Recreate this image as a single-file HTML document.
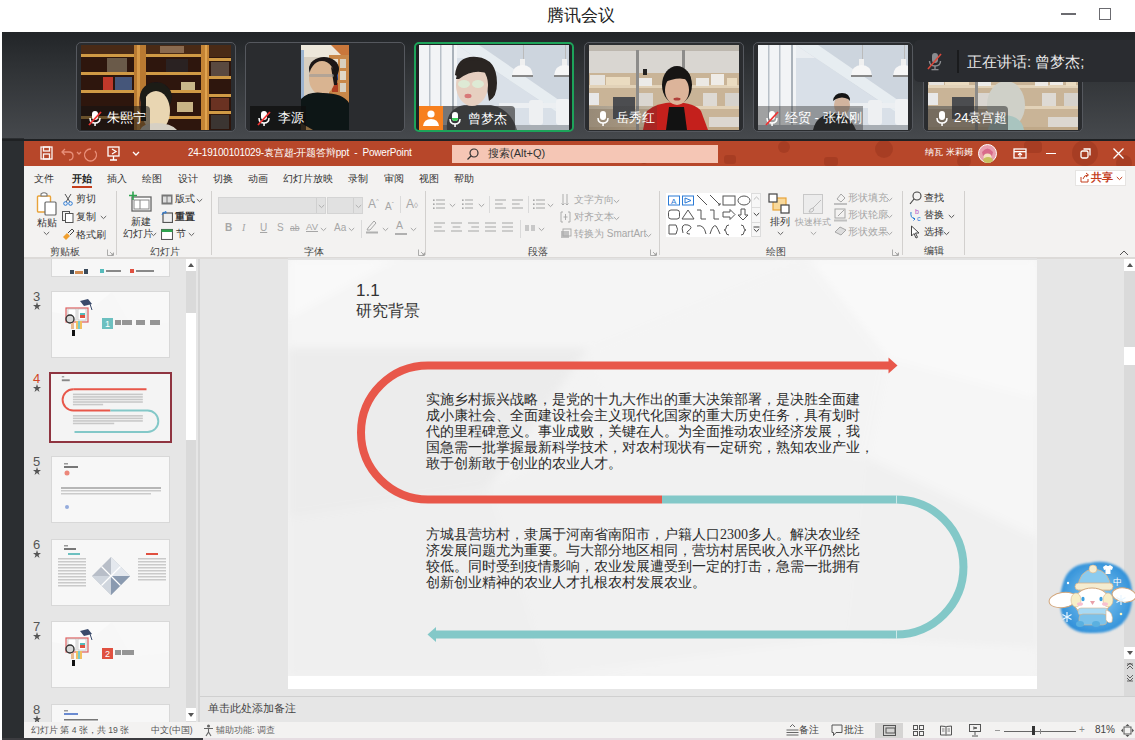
<!DOCTYPE html>
<html><head><meta charset="utf-8">
<style>
*{margin:0;padding:0;box-sizing:border-box}
html,body{width:1135px;height:740px;overflow:hidden;background:#fff;font-family:"Liberation Sans",sans-serif;position:relative}
.a{position:absolute}
.t{position:absolute;white-space:nowrap;line-height:1}
</style></head><body>

<!-- Tencent meeting title bar -->
<div class="a" style="left:0;top:0;width:1135px;height:32px;background:#fff"></div>
<div class="t" style="left:547px;top:6.5px;font-size:16.5px;color:#222">腾讯会议</div>
<div class="a" style="left:1061px;top:13px;width:15px;height:2px;background:#6b6b70"></div>
<div class="a" style="left:1099px;top:8px;width:12px;height:12px;border:1.6px solid #6b6b70"></div>

<!-- video strip -->
<div class="a" id="vstrip" style="left:2px;top:32px;width:1133px;height:107px;background:linear-gradient(#222528,#2e3134 30%,#46494d)"></div>


<!-- TILES -->
<style>
.tile{position:absolute;top:42px;width:160px;height:90px;border:1.5px solid #55585e;border-radius:5px;background:#2a2c2f;overflow:hidden}
.vid{position:absolute;left:4px;top:2px;width:150px;height:85px}
.nm{position:absolute;color:#fff;font-size:13px;line-height:1;white-space:nowrap}
</style>
<div class="tile" style="left:76px">
 <svg class="vid" viewBox="0 0 150 85" width="150" height="85">
  <defs><filter id="bl1"><feGaussianBlur stdDeviation="0.6"/></filter></defs>
  <g filter="url(#bl1)">
  <rect width="150" height="85" fill="#2e160b"/>
  <rect x="0" y="0" width="150" height="12" fill="#4a2a14"/>
  <rect x="0" y="9" width="53" height="3" fill="#d09a45"/>
  <rect x="65" y="9" width="56" height="3" fill="#d09a45"/>
  <rect x="127" y="13" width="23" height="3" fill="#d09a45"/>
  <rect x="0" y="27" width="53" height="3" fill="#d09a45"/>
  <rect x="65" y="27" width="56" height="3" fill="#d09a45"/>
  <rect x="127" y="31" width="23" height="3" fill="#d09a45"/>
  <rect x="0" y="45" width="53" height="3" fill="#d09a45"/>
  <rect x="65" y="45" width="56" height="3" fill="#d09a45"/>
  <rect x="127" y="49" width="23" height="3" fill="#d09a45"/>
  <rect x="0" y="71" width="53" height="3" fill="#d09a45"/>
  <rect x="82" y="71" width="40" height="3" fill="#d09a45"/>
  <rect x="127" y="66" width="23" height="3" fill="#d09a45"/>
  <rect x="53" y="0" width="12" height="85" fill="#b97a32"/>
  <rect x="56" y="0" width="3" height="85" fill="#d89a48"/>
  <rect x="120" y="0" width="8" height="85" fill="#c48434"/>
  <rect x="124" y="0" width="2" height="85" fill="#e0a450"/>
  <rect x="22" y="32" width="10" height="13" fill="#c0392b"/>
  <rect x="34" y="32" width="17" height="13" fill="#45577a"/>
  <rect x="26" y="13" width="20" height="14" fill="#6a5a48"/>
  <rect x="85" y="14" width="22" height="13" fill="#2a2420"/>
  <rect x="100" y="37" width="14" height="8" fill="#c9b88a"/>
  <rect x="130" y="17" width="18" height="14" fill="#5a4a40"/>
  <rect x="130" y="53" width="18" height="12" fill="#6a3020"/>
  <rect x="96" y="57" width="16" height="10" fill="#c8b486"/>
  <rect x="130" y="70" width="18" height="14" fill="#3a3430"/>
  <rect x="79" y="1" width="24" height="7" fill="#8a6a50"/>
  <ellipse cx="64" cy="58" rx="6" ry="14" fill="#6a3a24"/>
  <ellipse cx="75" cy="52" rx="16" ry="15" fill="#1e1a17"/>
  <ellipse cx="75" cy="66" rx="14" ry="20" fill="#e9d6b2"/>
  <rect x="60" y="50" width="5" height="26" fill="#1e1a17"/>
  <path d="M59 85 Q62 78 75 78 Q90 78 96 85 Z" fill="#d6d0c4"/>
  </g>
 </svg>
 <div class="a" style="left:4px;top:63px;width:69px;height:24px;background:rgba(20,20,20,.55);border-radius:0 4px 0 0"></div>
 <svg class="a" style="left:10px;top:67px" width="16" height="17" viewBox="0 0 16 17"><rect x="5" y="1" width="6" height="9" rx="3" fill="#fff"/><path d="M3 8 Q3 13 8 13 Q13 13 13 8" stroke="#fff" stroke-width="1.5" fill="none"/><rect x="7.3" y="13" width="1.5" height="3" fill="#fff"/><line x1="2" y1="15" x2="14" y2="2" stroke="#e33" stroke-width="1.8"/></svg>
 <div class="nm" style="left:30px;top:68px">朱熙宁</div>
</div>

<div class="tile" style="left:245px">
 <svg class="a" style="left:55px;top:2px" width="48" height="85" viewBox="0 0 48 85">
  <defs><filter id="bl2"><feGaussianBlur stdDeviation="0.7"/></filter></defs>
  <g filter="url(#bl2)">
  <rect width="48" height="85" fill="#d8cfc0"/>
  <rect x="0" y="0" width="48" height="12" fill="#ede7da"/>
  <path d="M30 0 L48 0 L48 18 Z" fill="#c9773a"/>
  <rect x="0" y="5" width="3" height="50" fill="#9ab3d0"/>
  <rect x="28" y="10" width="20" height="50" fill="#c8884a"/>
  <rect x="31" y="14" width="6" height="9" fill="#e8e0d0"/><rect x="39" y="14" width="6" height="9" fill="#d8d0c0"/>
  <rect x="31" y="26" width="6" height="9" fill="#3050a0"/><rect x="39" y="26" width="6" height="9" fill="#e0d8c8"/>
  <rect x="31" y="38" width="6" height="9" fill="#b04020"/><rect x="39" y="38" width="6" height="9" fill="#d8d0c0"/>
  <ellipse cx="23" cy="24" rx="15" ry="12" fill="#1a1816"/>
  <ellipse cx="21" cy="33" rx="13" ry="17" fill="#d9b491"/>
  <path d="M30 22 Q38 26 36 40 L33 40 Z" fill="#1a1816"/>
  <rect x="8" y="29" width="25" height="3" rx="1.5" fill="#999" opacity=".6"/>
  <path d="M0 54 Q8 46 22 48 Q42 48 48 58 L48 85 L0 85 Z" fill="#111214"/>
  <path d="M0 78 L12 85 L0 85 Z" fill="#8a6a40"/>
  </g>
 </svg>
 <div class="a" style="left:4px;top:63px;width:56px;height:24px;background:rgba(15,15,15,.75)"></div>
 <svg class="a" style="left:10px;top:67px" width="16" height="17" viewBox="0 0 16 17"><rect x="5" y="1" width="6" height="9" rx="3" fill="#fff"/><path d="M3 8 Q3 13 8 13 Q13 13 13 8" stroke="#fff" stroke-width="1.5" fill="none"/><rect x="7.3" y="13" width="1.5" height="3" fill="#fff"/><line x1="2" y1="15" x2="14" y2="2" stroke="#e33" stroke-width="1.8"/></svg>
 <div class="nm" style="left:32px;top:68px">李源</div>
</div>


<div class="tile" style="left:414px;border:2px solid #1da35a;background:#1f2124">
 <svg class="vid" style="left:3px;top:1px" viewBox="0 0 150 85" width="150" height="85">
  
  <rect width="150" height="85" fill="#d9e0e8"/>
  <rect x="0" y="0" width="150" height="13" fill="#e9edf1"/>
  <path d="M38 0 L150 0 L150 70 L130 62 Z" fill="#cdd5de"/>
  <path d="M38 0 L60 0 L150 62 L150 75 Z" fill="#eef2f5" opacity=".8"/>
  <rect x="0" y="0" width="38" height="85" fill="#f2f4f6"/>
  <rect x="10" y="0" width="1.5" height="85" fill="#b8c0c8"/>
  <rect x="21" y="0" width="1.5" height="85" fill="#b8c0c8"/>
  <rect x="33" y="0" width="2" height="85" fill="#aab2ba"/>
  <rect x="104" y="0" width="1" height="16" fill="#bbb"/>
  <rect x="101" y="14" width="5" height="8" fill="#f0f0f0"/><path d="M93 31 Q94 20 103.5 20 Q113 20 114 31 Z" fill="#f6f6f6"/><rect x="93" y="30" width="21" height="2" fill="#888"/>
  <rect x="146" y="0" width="1" height="16" fill="#bbb"/>
  <rect x="143" y="14" width="5" height="8" fill="#f0f0f0"/><path d="M135 31 Q136 20 145.5 20 Q155 20 156 31 Z" fill="#f6f6f6"/><rect x="135" y="30" width="21" height="2" fill="#888"/>
  <rect x="80" y="58" width="70" height="5" fill="#eceff2"/>
  <rect x="110" y="55" width="14" height="25" rx="3" fill="#eef0f2"/>
  <rect x="137" y="54" width="14" height="26" rx="3" fill="#f0f2f4"/>
  <rect x="0" y="80" width="150" height="5" fill="#a8aeb4"/>

  <path d="M28 85 Q26 64 45 60 L72 60 Q92 64 98 85 Z" fill="#55575a"/>
  <path d="M36 30 Q38 10 58 12 Q78 14 78 38 Q78 52 70 56 L66 30 Q52 24 40 32 Z" fill="#2a2522"/>
  <ellipse cx="53" cy="40" rx="16" ry="21" fill="#e6cfc0"/>
  <path d="M37 34 Q40 14 58 15 Q74 17 72 30 Q56 22 40 34 Z" fill="#2a2522"/>
  <ellipse cx="45" cy="39" rx="6" ry="4" fill="#dcefd8" opacity=".85"/>
  <ellipse cx="59" cy="39" rx="6" ry="4" fill="#dcefd8" opacity=".85"/>
  <ellipse cx="49" cy="51" rx="3.5" ry="2.2" fill="#d87878"/>
 </svg>
 <div class="a" style="left:3px;top:62px;width:24px;height:24px;background:#f7801e"></div>
 <svg class="a" style="left:3px;top:62px" width="24" height="24" viewBox="0 0 24 24"><circle cx="12" cy="8" r="3.6" fill="#fff"/><path d="M4 20 Q5 13 12 13 Q19 13 20 20 Z" fill="#fff"/></svg>
 <div class="a" style="left:27px;top:62px;width:72px;height:24px;background:rgba(40,40,40,.62);border-radius:0 4px 0 0"></div>
 <svg class="a" style="left:31px;top:67px" width="16" height="17" viewBox="0 0 16 17"><rect x="5" y="1" width="6" height="9" rx="3" fill="#fff"/><path d="M5 7 L11 7 L11 7.5 Q11 10 8 10 Q5 10 5 7.5Z" fill="#3ccf5a"/><path d="M3 8 Q3 13 8 13 Q13 13 13 8" stroke="#fff" stroke-width="1.5" fill="none"/><rect x="7.3" y="13" width="1.5" height="3" fill="#fff"/></svg>
 <div class="nm" style="left:52px;top:68px">曾梦杰</div>
</div>

<div class="tile" style="left:584px">
 <svg class="vid" viewBox="0 0 150 85" width="150" height="85">
  
  <rect width="150" height="85" fill="#d4cfc7"/>
  <rect x="0" y="0" width="150" height="6" fill="#bdb7ae"/>
  <rect x="0" y="6" width="150" height="22" fill="#d9d6d1"/>
  <rect x="0" y="28" width="150" height="55" fill="#c9b497"/>
  <rect x="0" y="40" width="150" height="3" fill="#e2d2b8"/>
  <rect x="0" y="61" width="150" height="3" fill="#e2d2b8"/>
  <rect x="0" y="82" width="150" height="3" fill="#bfa888"/>
  <rect x="47" y="5" width="3" height="80" fill="#8d8c8a"/>
  <rect x="93" y="5" width="3" height="20" fill="#8d8c8a"/>
  <rect x="1" y="30" width="15" height="10" fill="#e6e3de"/>
  <rect x="17" y="32" width="24" height="8" fill="#eadbc0"/>
  <rect x="50" y="33" width="13" height="8" fill="#ecebe8"/>
  <rect x="54" y="24" width="4" height="6" fill="#222"/>
  <rect x="107" y="33" width="13" height="8" fill="#ece9e4"/>
  <rect x="122" y="29" width="13" height="11" fill="#efece7"/>
  <rect x="138" y="33" width="10" height="8" fill="#eadbc0"/>
  <rect x="0" y="48" width="10" height="12" fill="#e8e8e8"/>
  <rect x="24" y="52" width="22" height="22" fill="#4c4d50"/>
  <rect x="50" y="48" width="14" height="13" fill="#dad6d0"/>
  <rect x="114" y="48" width="14" height="13" fill="#dedad4"/>
  <rect x="136" y="48" width="14" height="13" fill="#d6d2cc"/>
  <rect x="120" y="72" width="30" height="10" fill="#dcd7d0"/>

  <path d="M54 85 L58 66 Q66 58 86 57 Q106 58 112 66 L119 85 Z" fill="#c4201c"/>
  <path d="M80 62 L95 62 L98 85 L77 85 Z" fill="#121212"/>
  <ellipse cx="88" cy="40" rx="15" ry="19" fill="#171514"/>
  <ellipse cx="88" cy="45" rx="12" ry="15" fill="#dcb49a"/>
  <path d="M74 38 Q76 24 88 23 Q102 24 102 36 Q90 30 74 38 Z" fill="#171514"/>
  <ellipse cx="88" cy="54" rx="3.5" ry="1.5" fill="#b0403a"/>
 </svg>
 <div class="a" style="left:4px;top:63px;width:68px;height:24px;background:linear-gradient(90deg,rgba(60,60,60,.35),rgba(60,60,60,.2))"></div>
 <svg class="a" style="left:10px;top:67px" width="16" height="17" viewBox="0 0 16 17"><rect x="5" y="1" width="6" height="9" rx="3" fill="#fff"/><path d="M3 8 Q3 13 8 13 Q13 13 13 8" stroke="#fff" stroke-width="1.5" fill="none"/><rect x="7.3" y="13" width="1.5" height="3" fill="#fff"/></svg>
 <div class="nm" style="left:31px;top:68px">岳秀红</div>
</div>

<div class="tile" style="left:753px">
 <svg class="vid" viewBox="0 0 150 85" width="150" height="85">
  
  <rect width="150" height="85" fill="#d9e0e8"/>
  <rect x="0" y="0" width="150" height="13" fill="#e9edf1"/>
  <path d="M38 0 L150 0 L150 70 L130 62 Z" fill="#cdd5de"/>
  <path d="M38 0 L60 0 L150 62 L150 75 Z" fill="#eef2f5" opacity=".8"/>
  <rect x="0" y="0" width="38" height="85" fill="#f2f4f6"/>
  <rect x="10" y="0" width="1.5" height="85" fill="#b8c0c8"/>
  <rect x="21" y="0" width="1.5" height="85" fill="#b8c0c8"/>
  <rect x="33" y="0" width="2" height="85" fill="#aab2ba"/>
  <rect x="104" y="0" width="1" height="16" fill="#bbb"/>
  <rect x="101" y="14" width="5" height="8" fill="#f0f0f0"/><path d="M93 31 Q94 20 103.5 20 Q113 20 114 31 Z" fill="#f6f6f6"/><rect x="93" y="30" width="21" height="2" fill="#888"/>
  <rect x="146" y="0" width="1" height="16" fill="#bbb"/>
  <rect x="143" y="14" width="5" height="8" fill="#f0f0f0"/><path d="M135 31 Q136 20 145.5 20 Q155 20 156 31 Z" fill="#f6f6f6"/><rect x="135" y="30" width="21" height="2" fill="#888"/>
  <rect x="80" y="58" width="70" height="5" fill="#eceff2"/>
  <rect x="110" y="55" width="14" height="25" rx="3" fill="#eef0f2"/>
  <rect x="137" y="54" width="14" height="26" rx="3" fill="#f0f2f4"/>
  <rect x="0" y="80" width="150" height="5" fill="#a8aeb4"/>

  <path d="M55 85 Q58 70 76 68 Q92 70 98 85 Z" fill="#151618"/>
  <ellipse cx="84" cy="60" rx="8" ry="10" fill="#d2b49e"/>
  <path d="M75 56 Q76 48 84 48 Q92 48 92 56 L90 54 Q84 51 78 54 Z" fill="#151515"/>
 </svg>
 <div class="a" style="left:4px;top:63px;width:105px;height:24px;background:rgba(60,60,60,.45)"></div>
 <svg class="a" style="left:10px;top:67px" width="16" height="17" viewBox="0 0 16 17"><rect x="5" y="1" width="6" height="9" rx="3" fill="#fff"/><path d="M3 8 Q3 13 8 13 Q13 13 13 8" stroke="#fff" stroke-width="1.5" fill="none"/><rect x="7.3" y="13" width="1.5" height="3" fill="#fff"/><line x1="2" y1="15" x2="14" y2="2" stroke="#e33" stroke-width="1.8"/></svg>
 <div class="nm" style="left:31px;top:68px">经贸 - 张松刚</div>
</div>

<div class="tile" style="left:923px">
 <svg class="vid" viewBox="0 0 150 85" width="150" height="85">
  
  <rect width="150" height="85" fill="#d4cfc7"/>
  <rect x="0" y="0" width="150" height="6" fill="#bdb7ae"/>
  <rect x="0" y="6" width="150" height="22" fill="#d9d6d1"/>
  <rect x="0" y="28" width="150" height="55" fill="#c9b497"/>
  <rect x="0" y="40" width="150" height="3" fill="#e2d2b8"/>
  <rect x="0" y="61" width="150" height="3" fill="#e2d2b8"/>
  <rect x="0" y="82" width="150" height="3" fill="#bfa888"/>
  <rect x="47" y="5" width="3" height="80" fill="#8d8c8a"/>
  <rect x="93" y="5" width="3" height="20" fill="#8d8c8a"/>
  <rect x="1" y="30" width="15" height="10" fill="#e6e3de"/>
  <rect x="17" y="32" width="24" height="8" fill="#eadbc0"/>
  <rect x="50" y="33" width="13" height="8" fill="#ecebe8"/>
  <rect x="54" y="24" width="4" height="6" fill="#222"/>
  <rect x="107" y="33" width="13" height="8" fill="#ece9e4"/>
  <rect x="122" y="29" width="13" height="11" fill="#efece7"/>
  <rect x="138" y="33" width="10" height="8" fill="#eadbc0"/>
  <rect x="0" y="48" width="10" height="12" fill="#e8e8e8"/>
  <rect x="24" y="52" width="22" height="22" fill="#4c4d50"/>
  <rect x="50" y="48" width="14" height="13" fill="#dad6d0"/>
  <rect x="114" y="48" width="14" height="13" fill="#dedad4"/>
  <rect x="136" y="48" width="14" height="13" fill="#d6d2cc"/>
  <rect x="120" y="72" width="30" height="10" fill="#dcd7d0"/>

  <ellipse cx="78" cy="60" rx="19" ry="24" fill="#cfd0c8"/>
  <path d="M60 85 Q62 72 78 70 Q94 72 96 85 Z" fill="#a9c4bf"/>
 </svg>
 <div class="a" style="left:4px;top:63px;width:80px;height:24px;background:rgba(50,50,50,.55);border-radius:0 4px 0 0"></div>
 <svg class="a" style="left:10px;top:67px" width="16" height="17" viewBox="0 0 16 17"><rect x="5" y="1" width="6" height="9" rx="3" fill="#fff"/><path d="M3 8 Q3 13 8 13 Q13 13 13 8" stroke="#fff" stroke-width="1.5" fill="none"/><rect x="7.3" y="13" width="1.5" height="3" fill="#fff"/></svg>
 <div class="nm" style="left:30px;top:68px">24袁宫超</div>
</div>

<!-- speaking overlay -->
<div class="a" style="left:914px;top:40px;width:221px;height:42px;background:#2a2c30;border-radius:5px 0 0 5px"></div>
<svg class="a" style="left:926px;top:52px" width="18" height="19" viewBox="0 0 18 19"><rect x="6" y="1" width="6" height="10" rx="3" fill="#8a8c90"/><path d="M3.5 9 Q3.5 14 9 14 Q14.5 14 14.5 9" stroke="#8a8c90" stroke-width="1.4" fill="none"/><rect x="8.3" y="14" width="1.4" height="3" fill="#8a8c90"/><rect x="5.5" y="17" width="7" height="1.3" fill="#8a8c90"/><line x1="2" y1="17" x2="15" y2="2" stroke="#d9483b" stroke-width="1.6"/></svg>
<div class="a" style="left:957px;top:50px;width:1.5px;height:23px;background:#1a1b1d"></div>
<div class="t" style="left:967px;top:54px;font-size:15px;color:#e8e8e8">正在讲话: 曾梦杰;</div>

<!-- PPT window -->
<div class="a" style="left:2px;top:138px;width:22px;height:602px;background:#2b2e31"></div>
<div class="a" style="left:2px;top:139px;width:1133px;height:2px;background:#1f2123"></div>
<div class="a" id="titlebar" style="left:24px;top:141px;width:1111px;height:25px;background:#b7472a"></div>
<div class="a" id="ribbon" style="left:24px;top:166px;width:1111px;height:92px;background:#f3f2f1"></div>
<div class="a" style="left:24px;top:257px;width:1111px;height:2px;background:#dcdad8"></div>


<!-- ppt title contents -->
<svg class="a" style="left:24px;top:141px" width="1111" height="25" viewBox="0 0 1111 25">
  <g fill="#a63d23" opacity=".9">
   <circle cx="860" cy="8" r="9"/><circle cx="1061" cy="12" r="13"/><rect x="1000" y="0" width="18" height="12" rx="4"/>
   <circle cx="620" cy="18" r="5"/><circle cx="760" cy="6" r="6"/><circle cx="940" cy="20" r="7"/><rect x="700" y="14" width="12" height="9" rx="3"/>
   <circle cx="1100" cy="22" r="8"/><rect x="800" y="16" width="14" height="9" rx="3"/>
  </g>
  <!-- save icon -->
  <g stroke="#fff" stroke-width="1.3" fill="none" opacity=".95">
   <rect x="17" y="6" width="11" height="12"/><rect x="19.5" y="6" width="6" height="4"/><rect x="19.5" y="13" width="6" height="5"/>
  </g>
  <g stroke="#e88f79" stroke-width="1.3" fill="none">
   <path d="M41 8 L38 11 L41 14 M38 11 L45 11 Q49 11 49 15 Q49 19 45 19"/>
   <path d="M53 11 L55 13 L57 11"/>
   <path d="M67 8 A6 6 0 1 0 71 10"/>
  </g>
  <g stroke="#fff" stroke-width="1.3" fill="none">
   <rect x="84" y="6" width="11" height="9"/><path d="M89.5 15 L89.5 19 M86 19 L93 19 M88 8 L92 10.5 L88 13"/>
   <path d="M109 11 L112 14 L115 11"/>
  </g>
</svg>
<div class="t" style="left:188px;top:148px;font-size:10px;color:#fff;letter-spacing:-0.2px">24-19100101029-袁宫超-开题答辩ppt&nbsp; -&nbsp; PowerPoint</div>
<div class="a" style="left:452px;top:145px;width:266px;height:18px;background:#f5c6b5"></div>
<svg class="a" style="left:466px;top:147px" width="14" height="14" viewBox="0 0 14 14"><circle cx="8" cy="6" r="4" stroke="#333" stroke-width="1.2" fill="none"/><line x1="5" y1="9" x2="1.5" y2="12.5" stroke="#333" stroke-width="1.2"/></svg>
<div class="t" style="left:488px;top:148px;font-size:11px;color:#333">搜索(Alt+Q)</div>
<div class="t" style="left:925px;top:148px;font-size:9px;color:#fff">纳瓦 米莉姆</div>
<svg class="a" style="left:978px;top:144px" width="19" height="19" viewBox="0 0 19 19"><circle cx="9.5" cy="9.5" r="9" fill="#e8a0b0"/><circle cx="9.5" cy="9.5" r="9" fill="none" stroke="#fff" stroke-width="1"/><path d="M4 8 Q9.5 1 15 8 L14 12 Q9.5 9 5 12 Z" fill="#d86a8a"/><ellipse cx="9.5" cy="13" rx="4" ry="3.5" fill="#f4e0c0"/><ellipse cx="10" cy="16" rx="5" ry="3" fill="#c8c060"/></svg>
<svg class="a" style="left:1012px;top:146px" width="16" height="16" viewBox="0 0 16 16"><rect x="2" y="3" width="12" height="9" stroke="#fff" stroke-width="1.3" fill="none"/><rect x="2" y="5" width="12" height="1.3" fill="#fff"/><path d="M8 7 L8 11 M6 9 L8 7 L10 9" stroke="#fff" stroke-width="1.1" fill="none"/></svg>
<div class="a" style="left:1046px;top:153px;width:10px;height:1.3px;background:#fff"></div>
<svg class="a" style="left:1079px;top:147px" width="13" height="13" viewBox="0 0 13 13"><rect x="2" y="4" width="7" height="7" rx="1.5" stroke="#fff" stroke-width="1.3" fill="none"/><path d="M4.5 2 L11 2 L11 8.5" stroke="#fff" stroke-width="1.3" fill="none"/></svg>
<svg class="a" style="left:1112px;top:147px" width="13" height="13" viewBox="0 0 13 13"><path d="M1.5 1.5 L11.5 11.5 M11.5 1.5 L1.5 11.5" stroke="#fff" stroke-width="1.3"/></svg>

<!-- ribbon contents -->
<div class="t" style="left:34px;top:173.5px;font-size:10px;color:#333;">文件</div>
<div class="t" style="left:72px;top:173.5px;font-size:10px;color:#222;font-weight:bold;">开始</div>
<div class="t" style="left:107px;top:173.5px;font-size:10px;color:#333;">插入</div>
<div class="t" style="left:142px;top:173.5px;font-size:10px;color:#333;">绘图</div>
<div class="t" style="left:178px;top:173.5px;font-size:10px;color:#333;">设计</div>
<div class="t" style="left:213px;top:173.5px;font-size:10px;color:#333;">切换</div>
<div class="t" style="left:248px;top:173.5px;font-size:10px;color:#333;">动画</div>
<div class="t" style="left:283px;top:173.5px;font-size:10px;color:#333;">幻灯片放映</div>
<div class="t" style="left:348px;top:173.5px;font-size:10px;color:#333;">录制</div>
<div class="t" style="left:384px;top:173.5px;font-size:10px;color:#333;">审阅</div>
<div class="t" style="left:419px;top:173.5px;font-size:10px;color:#333;">视图</div>
<div class="t" style="left:454px;top:173.5px;font-size:10px;color:#333;">帮助</div>
<div class="a" style="left:72px;top:185.5px;width:20px;height:2px;background:#c43e1c"></div>
<div class="a" style="left:1075px;top:170px;width:51px;height:16px;background:#fff;border:1px solid #e6e4e2"></div>
<svg class="a" style="left:1079px;top:172px" width="11" height="11" viewBox="0 0 11 11"><path d="M2 5 L2 10 L9 10 L9 7" stroke="#c43e1c" stroke-width="1" fill="none"/><path d="M4 7 Q5 3 9 3 M7 1 L9.5 3 L7 5" stroke="#c43e1c" stroke-width="1" fill="none"/></svg>
<div class="t" style="left:1091px;top:172.2px;font-size:10.5px;color:#c43e1c;font-weight:bold;">共享</div>
<svg class="a" style="left:1116px;top:176px" width="7" height="5" viewBox="0 0 7 5"><path d="M0.8 1 L3.5 3.6 L6.2 1" stroke="#c43e1c" stroke-width="1" fill="none"/></svg>
<svg class="a" style="left:36px;top:192px" width="22" height="25" viewBox="0 0 22 25">
<rect x="1.5" y="4" width="13" height="16" rx="1" stroke="#e8a33a" stroke-width="1.4" fill="#fff"/>
<path d="M5 4 L5 2 Q8 -0.5 11 2 L11 4 Z" stroke="#777" stroke-width="1.1" fill="#fff"/>
<rect x="9" y="10" width="11" height="13" rx="1" stroke="#666" stroke-width="1.2" fill="#fff"/>
</svg>
<div class="t" style="left:37px;top:217.5px;font-size:10px;color:#333;">粘贴</div>
<svg class="a" style="left:43px;top:231px" width="7" height="5" viewBox="0 0 7 5"><path d="M0.8 1 L3.5 3.6 L6.2 1" stroke="#666" stroke-width="1" fill="none"/></svg>
<svg class="a" style="left:63px;top:193px" width="10" height="13" viewBox="0 0 10 13"><path d="M2 1 L7 9 M8 1 L3 9" stroke="#555" stroke-width="1"/><circle cx="2.5" cy="10.5" r="1.8" stroke="#2b7bd6" stroke-width="1" fill="none"/><circle cx="7.5" cy="10.5" r="1.8" stroke="#2b7bd6" stroke-width="1" fill="none"/></svg>
<div class="t" style="left:76px;top:194.0px;font-size:10px;color:#333;">剪切</div>
<svg class="a" style="left:62px;top:211px" width="12" height="12" viewBox="0 0 12 12"><rect x="0.5" y="0.5" width="7" height="9" stroke="#555" stroke-width="1" fill="none"/><rect x="3.5" y="2.5" width="7.5" height="9" stroke="#555" stroke-width="1" fill="#fff"/></svg>
<div class="t" style="left:76px;top:212.0px;font-size:10px;color:#333;">复制</div>
<svg class="a" style="left:100px;top:215px" width="7" height="5" viewBox="0 0 7 5"><path d="M0.8 1 L3.5 3.6 L6.2 1" stroke="#666" stroke-width="1" fill="none"/></svg>
<svg class="a" style="left:62px;top:228px" width="13" height="12" viewBox="0 0 13 12"><path d="M1 9 L5 5 L8 8 L4 12 Z" fill="#f0a030"/><path d="M6 5 L10 1 L12 3 L8 7" stroke="#444" stroke-width="1" fill="none"/></svg>
<div class="t" style="left:76px;top:229.5px;font-size:10px;color:#333;">格式刷</div>
<div class="t" style="left:50px;top:246.5px;font-size:10px;color:#444;">剪贴板</div>
<svg class="a" style="left:107px;top:249px" width="7" height="7" viewBox="0 0 7 7"><path d="M0.5 0.5 L0.5 6.5 L6.5 6.5 L6.5 3.5 M3 3 L6 6 M4 6 L6 6 L6 4" stroke="#999" stroke-width=".8" fill="none"/></svg>
<div class="a" style="left:116px;top:191px;width:1px;height:64px;background:#d2d0ce"></div>
<svg class="a" style="left:128px;top:191px" width="24" height="22" viewBox="0 0 24 22">
<rect x="4" y="6" width="19" height="14" stroke="#666" stroke-width="1.3" fill="#fff"/>
<rect x="6" y="9" width="15" height="9" stroke="#888" stroke-width="1" fill="none"/>
<path d="M12 9 L12 18" stroke="#888" stroke-width="1"/>
<path d="M5 0.5 L5 9 M1 4.5 L9 4.5" stroke="#2ea44f" stroke-width="1.6"/>
</svg>
<div class="t" style="left:131px;top:217.0px;font-size:10px;color:#333;">新建</div>
<div class="t" style="left:123px;top:228.5px;font-size:10px;color:#333;">幻灯片</div>
<svg class="a" style="left:150px;top:232px" width="7" height="5" viewBox="0 0 7 5"><path d="M0.8 1 L3.5 3.6 L6.2 1" stroke="#666" stroke-width="1" fill="none"/></svg>
<svg class="a" style="left:161px;top:194px" width="12" height="11" viewBox="0 0 12 11"><rect x="0.5" y="0.5" width="11" height="10" fill="#777"/><rect x="2" y="2.5" width="3.5" height="6" fill="#ddd"/><rect x="6.5" y="2.5" width="3.5" height="6" fill="#ddd"/></svg>
<div class="t" style="left:175px;top:194.0px;font-size:10px;color:#333;">版式</div>
<svg class="a" style="left:196px;top:197.5px" width="7" height="5" viewBox="0 0 7 5"><path d="M0.8 1 L3.5 3.6 L6.2 1" stroke="#666" stroke-width="1" fill="none"/></svg>
<svg class="a" style="left:161px;top:211px" width="12" height="12" viewBox="0 0 12 12"><rect x="2" y="2" width="9.5" height="9.5" stroke="#555" stroke-width="1.2" fill="#eee"/><path d="M1 4 Q1 0.5 5 1 M3.5 -0.5 L5.5 1 L3.5 3" stroke="#2b7bd6" stroke-width="1" fill="none"/></svg>
<div class="t" style="left:175px;top:211.5px;font-size:10px;color:#333;font-weight:bold;">重置</div>
<svg class="a" style="left:161px;top:228px" width="12" height="12" viewBox="0 0 12 12"><rect x="0.5" y="1.5" width="11" height="10" stroke="#555" stroke-width="1.1" fill="#fff"/><rect x="0.5" y="1.5" width="11" height="2.5" fill="#2ea44f"/></svg>
<div class="t" style="left:176px;top:228.5px;font-size:10px;color:#333;">节</div>
<svg class="a" style="left:188px;top:232px" width="7" height="5" viewBox="0 0 7 5"><path d="M0.8 1 L3.5 3.6 L6.2 1" stroke="#666" stroke-width="1" fill="none"/></svg>
<div class="t" style="left:150px;top:246.5px;font-size:10px;color:#444;">幻灯片</div>
<div class="a" style="left:211px;top:191px;width:1px;height:64px;background:#d2d0ce"></div>
<div class="a" style="left:218px;top:197px;width:108px;height:17px;background:#e1e1e1;border:1px solid #d4d4d4"></div>
<div class="a" style="left:316px;top:198px;width:1px;height:15px;background:#d0d0d0"></div>
<svg class="a" style="left:318px;top:203.5px" width="7" height="5" viewBox="0 0 7 5"><path d="M0.8 1 L3.5 3.6 L6.2 1" stroke="#b0b0b0" stroke-width="1" fill="none"/></svg>
<div class="a" style="left:327px;top:197px;width:36px;height:17px;background:#e1e1e1;border:1px solid #d4d4d4"></div>
<div class="a" style="left:353px;top:198px;width:1px;height:15px;background:#d0d0d0"></div>
<svg class="a" style="left:355px;top:203.5px" width="7" height="5" viewBox="0 0 7 5"><path d="M0.8 1 L3.5 3.6 L6.2 1" stroke="#b0b0b0" stroke-width="1" fill="none"/></svg>
<div class="t" style="left:368px;top:198.4px;font-size:12px;color:#a6a6a6;">A<sup style="font-size:6px">^</sup></div>
<div class="t" style="left:385px;top:200.5px;font-size:10px;color:#a6a6a6;">A<sup style="font-size:6px">ˇ</sup></div>
<div class="a" style="left:400px;top:196px;width:1px;height:17px;background:#dadada"></div>
<div class="t" style="left:406px;top:198.4px;font-size:12px;color:#a6a6a6;">A<span style="font-size:8px">◊</span></div>
<div class="t" style="left:225px;top:222.5px;font-size:10px;color:#a6a6a6;font-weight:bold;">B</div>
<div class="t" style="left:242px;top:222.5px;font-size:10px;color:#a6a6a6;font-style:italic;font-family:Liberation Serif;">I</div>
<div class="t" style="left:260px;top:222.5px;font-size:10px;color:#a6a6a6;text-decoration:underline;">U</div>
<div class="t" style="left:277px;top:222.5px;font-size:10px;color:#a6a6a6;">S</div>
<div class="t" style="left:290px;top:223.8px;font-size:8.5px;color:#a6a6a6;"><s>ab</s></div>
<div class="t" style="left:306px;top:221.8px;font-size:9.5px;color:#a6a6a6;"><u>AV</u></div>
<svg class="a" style="left:320px;top:226.5px" width="7" height="5" viewBox="0 0 7 5"><path d="M0.8 1 L3.5 3.6 L6.2 1" stroke="#a6a6a6" stroke-width="1" fill="none"/></svg>
<div class="t" style="left:334px;top:223.0px;font-size:10px;color:#a6a6a6;">Aa</div>
<svg class="a" style="left:348px;top:226.5px" width="7" height="5" viewBox="0 0 7 5"><path d="M0.8 1 L3.5 3.6 L6.2 1" stroke="#a6a6a6" stroke-width="1" fill="none"/></svg>
<div class="a" style="left:361px;top:220px;width:1px;height:18px;background:#dadada"></div>
<svg class="a" style="left:365px;top:219px" width="14" height="15" viewBox="0 0 14 15"><path d="M3 9 L9 2 L11 4 L5 11 L2 11 Z" stroke="#a6a6a6" stroke-width="1" fill="none"/><rect x="1" y="12.5" width="12" height="2" fill="#b0b0b0"/></svg>
<svg class="a" style="left:382px;top:226.5px" width="7" height="5" viewBox="0 0 7 5"><path d="M0.8 1 L3.5 3.6 L6.2 1" stroke="#a6a6a6" stroke-width="1" fill="none"/></svg>
<div class="t" style="left:396px;top:220.2px;font-size:10.5px;color:#a6a6a6;">A</div>
<div class="a" style="left:395px;top:232.5px;width:12px;height:2px;background:#b0b0b0"></div>
<svg class="a" style="left:410px;top:226.5px" width="7" height="5" viewBox="0 0 7 5"><path d="M0.8 1 L3.5 3.6 L6.2 1" stroke="#a6a6a6" stroke-width="1" fill="none"/></svg>
<div class="t" style="left:304px;top:246.5px;font-size:10px;color:#444;">字体</div>
<svg class="a" style="left:418px;top:249px" width="7" height="7" viewBox="0 0 7 7"><path d="M0.5 0.5 L0.5 6.5 L6.5 6.5 L6.5 3.5 M3 3 L6 6 M4 6 L6 6 L6 4" stroke="#999" stroke-width=".8" fill="none"/></svg>
<div class="a" style="left:425px;top:191px;width:1px;height:64px;background:#d2d0ce"></div>
<svg class="a" style="left:433px;top:199px" width="12" height="14" viewBox="0 0 12 14"><rect x="0" y="0.4" width="1.6" height="1.6" fill="#a6a6a6"/><rect x="3" y="0.5" width="9" height="1" fill="#a6a6a6"/><rect x="0" y="4.4" width="1.6" height="1.6" fill="#a6a6a6"/><rect x="3" y="4.5" width="9" height="1" fill="#a6a6a6"/><rect x="0" y="8.4" width="1.6" height="1.6" fill="#a6a6a6"/><rect x="3" y="8.5" width="9" height="1" fill="#a6a6a6"/></svg>
<svg class="a" style="left:449px;top:202.5px" width="7" height="5" viewBox="0 0 7 5"><path d="M0.8 1 L3.5 3.6 L6.2 1" stroke="#a6a6a6" stroke-width="1" fill="none"/></svg>
<svg class="a" style="left:462px;top:199px" width="11" height="14" viewBox="0 0 11 14"><rect x="0" y="0.4" width="1.6" height="1.6" fill="#a6a6a6"/><rect x="3" y="0.5" width="8" height="1" fill="#a6a6a6"/><rect x="0" y="4.4" width="1.6" height="1.6" fill="#a6a6a6"/><rect x="3" y="4.5" width="8" height="1" fill="#a6a6a6"/><rect x="0" y="8.4" width="1.6" height="1.6" fill="#a6a6a6"/><rect x="3" y="8.5" width="8" height="1" fill="#a6a6a6"/></svg>
<svg class="a" style="left:478px;top:202.5px" width="7" height="5" viewBox="0 0 7 5"><path d="M0.8 1 L3.5 3.6 L6.2 1" stroke="#a6a6a6" stroke-width="1" fill="none"/></svg>
<div class="a" style="left:489px;top:196px;width:1px;height:17px;background:#dadada"></div>
<svg class="a" style="left:495px;top:199px" width="11" height="14" viewBox="0 0 11 14"><rect x="0" y="0.5" width="11" height="1" fill="#a6a6a6"/><rect x="0" y="4.5" width="7.699999999999999" height="1" fill="#a6a6a6"/><rect x="0" y="8.5" width="11" height="1" fill="#a6a6a6"/></svg>
<svg class="a" style="left:512px;top:199px" width="11" height="14" viewBox="0 0 11 14"><rect x="0" y="0.5" width="11" height="1" fill="#a6a6a6"/><rect x="0" y="4.5" width="7.699999999999999" height="1" fill="#a6a6a6"/><rect x="0" y="8.5" width="11" height="1" fill="#a6a6a6"/></svg>
<div class="a" style="left:528px;top:196px;width:1px;height:17px;background:#dadada"></div>
<svg class="a" style="left:533px;top:199px" width="12" height="14" viewBox="0 0 12 14"><rect x="0" y="0.4" width="1.6" height="1.6" fill="#a6a6a6"/><rect x="3" y="0.5" width="9" height="1" fill="#a6a6a6"/><rect x="0" y="4.4" width="1.6" height="1.6" fill="#a6a6a6"/><rect x="3" y="4.5" width="9" height="1" fill="#a6a6a6"/><rect x="0" y="8.4" width="1.6" height="1.6" fill="#a6a6a6"/><rect x="3" y="8.5" width="9" height="1" fill="#a6a6a6"/></svg>
<svg class="a" style="left:547px;top:202.5px" width="7" height="5" viewBox="0 0 7 5"><path d="M0.8 1 L3.5 3.6 L6.2 1" stroke="#a6a6a6" stroke-width="1" fill="none"/></svg>
<svg class="a" style="left:434px;top:222px" width="11" height="14" viewBox="0 0 11 14"><rect x="0" y="0.5" width="11" height="1" fill="#a6a6a6"/><rect x="0" y="4.5" width="7.699999999999999" height="1" fill="#a6a6a6"/><rect x="0" y="8.5" width="11" height="1" fill="#a6a6a6"/></svg>
<svg class="a" style="left:451px;top:222px" width="11" height="14" viewBox="0 0 11 14"><rect x="0.0" y="0.5" width="11" height="1" fill="#a6a6a6"/><rect x="1.6500000000000004" y="4.5" width="7.699999999999999" height="1" fill="#a6a6a6"/><rect x="0.0" y="8.5" width="11" height="1" fill="#a6a6a6"/></svg>
<svg class="a" style="left:468px;top:222px" width="11" height="14" viewBox="0 0 11 14"><rect x="0" y="0.5" width="11" height="1" fill="#a6a6a6"/><rect x="3.3000000000000007" y="4.5" width="7.699999999999999" height="1" fill="#a6a6a6"/><rect x="0" y="8.5" width="11" height="1" fill="#a6a6a6"/></svg>
<svg class="a" style="left:485px;top:222px" width="11" height="14" viewBox="0 0 11 14"><rect x="0" y="0.5" width="11" height="1" fill="#a6a6a6"/><rect x="0" y="4.5" width="11" height="1" fill="#a6a6a6"/><rect x="0" y="8.5" width="11" height="1" fill="#a6a6a6"/></svg>
<svg class="a" style="left:502px;top:222px" width="11" height="14" viewBox="0 0 11 14"><rect x="0" y="0.5" width="11" height="1" fill="#a6a6a6"/><rect x="0" y="4.5" width="11" height="1" fill="#a6a6a6"/><rect x="0" y="8.5" width="11" height="1" fill="#a6a6a6"/></svg>
<div class="a" style="left:520px;top:220px;width:1px;height:18px;background:#dadada"></div>
<svg class="a" style="left:525px;top:224px" width="10" height="8" viewBox="0 0 10 8"><rect x="0" y="1" width="4" height="6" fill="#c8c8c8"/><rect x="6" y="1" width="4" height="6" fill="#c8c8c8"/></svg>
<svg class="a" style="left:538px;top:226.5px" width="7" height="5" viewBox="0 0 7 5"><path d="M0.8 1 L3.5 3.6 L6.2 1" stroke="#a6a6a6" stroke-width="1" fill="none"/></svg>
<svg class="a" style="left:561px;top:193px" width="10" height="14" viewBox="0 0 10 14"><path d="M2 1 L2 12 M0.5 10.5 L2 12 L3.5 10.5 M6 1 L6 12 M4.5 10.5 L6 12 L7.5 10.5" stroke="#a6a6a6" stroke-width=".9" fill="none"/></svg>
<div class="t" style="left:574px;top:194.5px;font-size:10px;color:#a6a6a6;">文字方向</div>
<svg class="a" style="left:613px;top:198.5px" width="7" height="5" viewBox="0 0 7 5"><path d="M0.8 1 L3.5 3.6 L6.2 1" stroke="#a6a6a6" stroke-width="1" fill="none"/></svg>
<svg class="a" style="left:560px;top:211px" width="11" height="12" viewBox="0 0 11 12"><path d="M3 1 L1 1 L1 11 L3 11 M8 1 L10 1 L10 11 L8 11 M5.5 3 L5.5 9 M3.5 6 L7.5 6" stroke="#a6a6a6" stroke-width=".9" fill="none"/></svg>
<div class="t" style="left:574px;top:211.5px;font-size:10px;color:#a6a6a6;">对齐文本</div>
<svg class="a" style="left:613px;top:215.5px" width="7" height="5" viewBox="0 0 7 5"><path d="M0.8 1 L3.5 3.6 L6.2 1" stroke="#a6a6a6" stroke-width="1" fill="none"/></svg>
<svg class="a" style="left:560px;top:228px" width="12" height="11" viewBox="0 0 12 11"><rect x="1" y="3" width="8" height="7" fill="#c0c0c0"/><rect x="3" y="1" width="8" height="7" fill="none" stroke="#a6a6a6" stroke-width=".9"/></svg>
<div class="t" style="left:574px;top:228.5px;font-size:10px;color:#a6a6a6;">转换为 SmartArt</div>
<svg class="a" style="left:645px;top:232.5px" width="7" height="5" viewBox="0 0 7 5"><path d="M0.8 1 L3.5 3.6 L6.2 1" stroke="#a6a6a6" stroke-width="1" fill="none"/></svg>
<div class="t" style="left:528px;top:246.5px;font-size:10px;color:#444;">段落</div>
<svg class="a" style="left:650px;top:249px" width="7" height="7" viewBox="0 0 7 7"><path d="M0.5 0.5 L0.5 6.5 L6.5 6.5 L6.5 3.5 M3 3 L6 6 M4 6 L6 6 L6 4" stroke="#999" stroke-width=".8" fill="none"/></svg>
<div class="a" style="left:659px;top:191px;width:1px;height:64px;background:#d2d0ce"></div>
<div class="a" style="left:666px;top:193px;width:86px;height:44px;background:#fff"></div>
<svg class="a" style="left:666px;top:193px" width="86" height="44" viewBox="0 0 86 44" fill="none" stroke="#555" stroke-width="1">
<rect x="2.5" y="3" width="11" height="9" stroke="#2b7bd6"/><text x="5" y="10.5" font-size="8" fill="#2b7bd6" stroke="none" font-family="Liberation Sans">A</text>
<rect x="16.5" y="3" width="11" height="9" stroke="#2b7bd6"/><path d="M19 5 L25 7.5 L19 10 Z" stroke="#2b7bd6"/>
<path d="M31 2 L41 12"/><path d="M44 2 L54 12 M52 12 L54 12 L54 10"/>
<rect x="57" y="3" width="12" height="9"/><ellipse cx="78" cy="7.5" rx="6" ry="4.5"/>
<rect x="2.5" y="17" width="11" height="9" rx="2.5"/><path d="M16 26 L22 17 L28 26 Z"/>
<path d="M31 17 L35 17 L35 26 L40 26"/><path d="M44 17 L48 17 L48 26 L53 26"/>
<path d="M57 19 L64 19 L64 16.5 L69 21.5 L64 26.5 L64 24 L57 24 Z"/><path d="M75 16 L79 16 L79 22 L82 22 L77 27 L72 22 L75 22 Z"/>
<path d="M3 32 L10 32 Q13 36 10 41 L3 41 Z"/><path d="M17 40 Q14 30 22 32 Q28 34 22 38 Q19 41 24 41"/>
<path d="M31 33 Q38 31 40 41"/><path d="M44 41 Q47 31 50 33 Q52 36 54 41"/>
<path d="M63 32 Q60 32 60 35 Q60 37 58 37 Q60 37 60 39 Q60 42 63 42"/><path d="M75 32 Q78 32 78 35 Q78 37 80 37 Q78 37 78 39 Q78 42 75 42"/>
</svg>
<div class="a" style="left:751px;top:193px;width:10px;height:44px;background:#f7f7f7;border:1px solid #dcdcdc"></div>
<div class="a" style="left:751px;top:207px;width:10px;height:1px;background:#dcdcdc"></div>
<div class="a" style="left:751px;top:222px;width:10px;height:1px;background:#dcdcdc"></div>
<svg class="a" style="left:753px;top:212px" width="7" height="5" viewBox="0 0 7 5"><path d="M0.8 1 L3.5 3.6 L6.2 1" stroke="#444" stroke-width="1" fill="none"/></svg>
<svg class="a" style="left:753px;top:196px" width="7" height="5" viewBox="0 0 7 5"><path d="M0.8 3.6 L3.5 1 L6.2 3.6" stroke="#bbb" stroke-width="1" fill="none"/></svg>
<svg class="a" style="left:753px;top:226px" width="7" height="7" viewBox="0 0 7 7"><path d="M0.5 1 L6.5 1 M0.8 3 L3.5 5.6 L6.2 3" stroke="#444" stroke-width="1" fill="none"/></svg>
<svg class="a" style="left:768px;top:193px" width="22" height="22" viewBox="0 0 22 22">
<rect x="5" y="5" width="13" height="12" fill="#f9d99a" stroke="#e8a33a" stroke-width="1.2"/>
<rect x="1" y="1" width="8" height="8" fill="#fff" stroke="#444" stroke-width="1.2"/>
<rect x="13" y="12" width="8" height="8" fill="#fff" stroke="#444" stroke-width="1.2"/>
</svg>
<div class="t" style="left:770px;top:217.0px;font-size:10px;color:#333;">排列</div>
<svg class="a" style="left:777px;top:231px" width="7" height="5" viewBox="0 0 7 5"><path d="M0.8 1 L3.5 3.6 L6.2 1" stroke="#666" stroke-width="1" fill="none"/></svg>
<div class="a" style="left:803px;top:194px;width:20px;height:20px;background:#ececec;border:1px solid #c8c8c8"></div>
<svg class="a" style="left:808px;top:199px" width="14" height="14" viewBox="0 0 14 14"><path d="M13 1 L5 9 M1 13 Q2 9 5 9 Q7 11 4 13 Z" stroke="#bbb" stroke-width="1" fill="none"/></svg>
<div class="t" style="left:795px;top:217.6px;font-size:9px;color:#a6a6a6;">快速样式</div>
<svg class="a" style="left:810px;top:231px" width="7" height="5" viewBox="0 0 7 5"><path d="M0.8 1 L3.5 3.6 L6.2 1" stroke="#a6a6a6" stroke-width="1" fill="none"/></svg>
<svg class="a" style="left:834px;top:192px" width="13" height="13" viewBox="0 0 13 13"><path d="M3 7 L7 2 L11 6 L7 10 Z" stroke="#a6a6a6" stroke-width="1" fill="none"/><rect x="0" y="11" width="13" height="2" fill="#c0c0c0"/></svg>
<div class="t" style="left:848px;top:193.3px;font-size:9.5px;color:#a6a6a6;">形状填充</div>
<svg class="a" style="left:886px;top:197px" width="7" height="5" viewBox="0 0 7 5"><path d="M0.8 1 L3.5 3.6 L6.2 1" stroke="#a6a6a6" stroke-width="1" fill="none"/></svg>
<svg class="a" style="left:834px;top:208px" width="13" height="14" viewBox="0 0 13 14"><rect x="1" y="1" width="10" height="9" stroke="#a6a6a6" stroke-width="1" fill="none"/><path d="M4 8 L10 2" stroke="#a6a6a6"/><rect x="0" y="11.5" width="13" height="2" fill="#c0c0c0"/></svg>
<div class="t" style="left:848px;top:209.8px;font-size:9.5px;color:#a6a6a6;">形状轮廓</div>
<svg class="a" style="left:886px;top:213.5px" width="7" height="5" viewBox="0 0 7 5"><path d="M0.8 1 L3.5 3.6 L6.2 1" stroke="#a6a6a6" stroke-width="1" fill="none"/></svg>
<svg class="a" style="left:834px;top:225px" width="13" height="12" viewBox="0 0 13 12"><path d="M1 7 L6 2 L12 5 L7 10 Z" stroke="#a6a6a6" stroke-width="1" fill="#ddd"/></svg>
<div class="t" style="left:848px;top:226.8px;font-size:9.5px;color:#a6a6a6;">形状效果</div>
<svg class="a" style="left:886px;top:230.5px" width="7" height="5" viewBox="0 0 7 5"><path d="M0.8 1 L3.5 3.6 L6.2 1" stroke="#a6a6a6" stroke-width="1" fill="none"/></svg>
<div class="t" style="left:766px;top:246.5px;font-size:10px;color:#444;">绘图</div>
<svg class="a" style="left:892px;top:249px" width="7" height="7" viewBox="0 0 7 7"><path d="M0.5 0.5 L0.5 6.5 L6.5 6.5 L6.5 3.5 M3 3 L6 6 M4 6 L6 6 L6 4" stroke="#999" stroke-width=".8" fill="none"/></svg>
<div class="a" style="left:902px;top:191px;width:1px;height:64px;background:#d2d0ce"></div>
<svg class="a" style="left:909px;top:191px" width="13" height="14" viewBox="0 0 13 14"><circle cx="8" cy="5" r="4" stroke="#444" stroke-width="1.1" fill="none"/><path d="M5 8 L1 13" stroke="#444" stroke-width="1.2"/></svg>
<div class="t" style="left:924px;top:193.0px;font-size:10px;color:#333;">查找</div>
<svg class="a" style="left:909px;top:208px" width="14" height="14" viewBox="0 0 14 14"><text x="6" y="6" font-size="7" fill="#b44fc6" font-family="Liberation Sans">b</text><text x="8" y="13" font-size="7" fill="#2b7bd6" font-family="Liberation Sans">c</text><path d="M2 4 Q1 10 6 11 M4.5 9.5 L6 11 L4.5 12.5" stroke="#2b7bd6" stroke-width="1" fill="none"/></svg>
<div class="t" style="left:924px;top:210.0px;font-size:10px;color:#333;">替换</div>
<svg class="a" style="left:948px;top:213.5px" width="7" height="5" viewBox="0 0 7 5"><path d="M0.8 1 L3.5 3.6 L6.2 1" stroke="#555" stroke-width="1" fill="none"/></svg>
<svg class="a" style="left:910px;top:225px" width="11" height="14" viewBox="0 0 11 14"><path d="M1.5 1 L1.5 11 L4 8.5 L6 13 L7.5 12.3 L5.5 8 L9 8 Z" stroke="#444" stroke-width="1" fill="#fff"/></svg>
<div class="t" style="left:924px;top:226.5px;font-size:10px;color:#333;">选择</div>
<svg class="a" style="left:943px;top:230.5px" width="7" height="5" viewBox="0 0 7 5"><path d="M0.8 1 L3.5 3.6 L6.2 1" stroke="#555" stroke-width="1" fill="none"/></svg>
<div class="t" style="left:924px;top:246.0px;font-size:10px;color:#444;">编辑</div>
<div class="a" style="left:964px;top:191px;width:1px;height:64px;background:#d2d0ce"></div>
<svg class="a" style="left:1119px;top:250px" width="10" height="6" viewBox="0 0 10 6"><path d="M1 5 L5 1 L9 5" stroke="#555" stroke-width="1" fill="none"/></svg>

<!-- slide panel -->
<div class="a" id="slpanel" style="left:24px;top:259px;width:174px;height:463px;background:#e6e6e6"></div>
<div class="a" style="left:198px;top:259px;width:2px;height:463px;background:#d6d6d6"></div>
<!-- main -->
<div class="a" id="main" style="left:200px;top:259px;width:935px;height:437px;background:#e6e6e6"></div>
<div class="a" style="left:200px;top:696px;width:935px;height:1px;background:#d0d0d0"></div>
<div class="a" id="notes" style="left:200px;top:697px;width:935px;height:26px;background:#e6e6e6"></div>
<div class="t" style="left:208px;top:702.5px;font-size:11px;color:#444">单击此处添加备注</div>

<!-- thumbs -->
<div class="a" style="left:24px;top:259px;width:174px;height:463px;overflow:hidden">
<div class="a" style="left:27px;top:-49.5px;width:119px;height:67px;background:#f7f7f7;border:1px solid #d8d8d8;overflow:hidden"><svg class="a" style="left:0;top:0" width="119" height="67"><rect x="18" y="59" width="4" height="4" fill="#3a4a5a"/><rect x="23" y="60" width="8" height="3" fill="#d08a50"/><rect x="32" y="58" width="4" height="5" fill="#3a4a5a"/><rect x="48" y="58" width="4" height="4" fill="#5bb"/><rect x="54" y="59" width="15" height="2" fill="#888"/><rect x="78" y="58" width="4" height="4" fill="#e05040"/><rect x="84" y="59" width="18" height="2" fill="#888"/></svg></div>
<div class="t" style="left:9px;top:31px;font-size:13px;color:#555;font-family:'Liberation Sans'">3</div>
<svg class="a" style="left:9px;top:43px" width="8" height="8" viewBox="0 0 8 8"><polygon points="4,0 5,3 8,3 5.5,5 6.5,8 4,6 1.5,8 2.5,5 0,3 3,3" fill="#555"/></svg>
<div class="a" style="left:27px;top:32px;width:119px;height:67px;background:#f7f7f7;border:1px solid #d8d8d8;overflow:hidden"><svg class="a" style="left:0;top:0" width="119" height="67" viewBox="0 0 119 67">
<polygon points="0,0 60,0 30,25 0,20" fill="#fafafa"/><polygon points="60,0 119,0 119,30 80,35" fill="#f8f8f8"/>
<rect x="14" y="16" width="22" height="14" fill="#f0f0f0" stroke="#e06060" stroke-width="1.2"/>
<rect x="16" y="17" width="8" height="11" fill="#fff" stroke="#aaa" stroke-width=".5"/><rect x="26" y="17" width="8" height="11" fill="#fff" stroke="#aaa" stroke-width=".5"/><rect x="28" y="22" width="5" height="4" fill="#e05040"/><rect x="28" y="21" width="5" height="2" fill="#5bb"/>
<circle cx="18" cy="27" r="4" fill="#d8d8d8" stroke="#333" stroke-width="1.4"/>
<path d="M28 9 L36 7 L40 12 L32 14 Z" fill="#3a4a6a"/><path d="M38 12 L40 18" stroke="#3a4a6a" stroke-width="1"/>
<rect x="19" y="31" width="3" height="6" fill="#e8b890"/><rect x="20" y="38" width="3" height="6" fill="#111"/>
<rect x="24" y="29" width="6" height="8" fill="#f2c060"/><rect x="26" y="29" width="2" height="8" fill="#7cc"/>
<rect x="50" y="26" width="11" height="11" fill="#6cc0c0"/>
<text x="53" y="35" font-size="9" fill="#fff" font-family="Liberation Sans">1</text>
<g fill="#555" opacity=".6"><rect x="63" y="28" width="6" height="5"/><rect x="70" y="28" width="10" height="5"/><rect x="84" y="28" width="9" height="5"/><rect x="98" y="28" width="10" height="5"/></g>
</svg></div>
<div class="t" style="left:9px;top:113px;font-size:13px;color:#d24726;font-family:'Liberation Sans'">4</div>
<svg class="a" style="left:9px;top:125px" width="8" height="8" viewBox="0 0 8 8"><polygon points="4,0 5,3 8,3 5.5,5 6.5,8 4,6 1.5,8 2.5,5 0,3 3,3" fill="#555"/></svg>
<div class="a" style="left:25px;top:113px;width:123px;height:71px;border:2.2px solid #8f3440;background:#f4f4f4;overflow:hidden"><div class="a" style="left:0;top:0;width:119px;height:67px"><svg class="a" style="left:0;top:0" width="119" height="67" viewBox="288 270 749 421">
<path d="M428 365.5 L889 365.5" stroke="#e8574a" stroke-width="12" fill="none"/>
<path d="M428 365.5 A67 67 0 0 0 428 499.5 L662 499.5" stroke="#e8574a" stroke-width="12" fill="none"/>
<path d="M662 499.5 L896 499.5 A67.5 67.5 0 0 1 896 634.5 L436 634.5" stroke="#83c8c8" stroke-width="12" fill="none"/>
<rect x="356" y="283" width="15" height="8" fill="#999"/><rect x="356" y="303" width="50" height="12" fill="#888"/>
<g fill="#666" opacity=".3">
<rect x="426" y="393" width="440" height="10"/><rect x="426" y="409" width="440" height="10"/><rect x="426" y="425" width="440" height="10"/><rect x="426" y="441" width="440" height="10"/><rect x="426" y="457" width="190" height="10"/>
<rect x="426" y="528" width="440" height="10"/><rect x="426" y="544" width="440" height="10"/><rect x="426" y="560" width="440" height="10"/><rect x="426" y="576" width="260" height="10"/>
</g></svg></div></div>
<div class="t" style="left:9px;top:196px;font-size:13px;color:#555;font-family:'Liberation Sans'">5</div>
<svg class="a" style="left:9px;top:208px" width="8" height="8" viewBox="0 0 8 8"><polygon points="4,0 5,3 8,3 5.5,5 6.5,8 4,6 1.5,8 2.5,5 0,3 3,3" fill="#555"/></svg>
<div class="a" style="left:27px;top:197px;width:119px;height:67px;background:#f7f7f7;border:1px solid #d8d8d8;overflow:hidden"><svg class="a" style="left:0;top:0" width="119" height="67" viewBox="0 0 119 67">
<rect x="12" y="6" width="4" height="1.5" fill="#999"/><rect x="12" y="9" width="14" height="2" fill="#777"/>
<circle cx="15" cy="16" r="2.5" fill="#e86a5a" opacity=".8"/>
<rect x="9" y="30" width="100" height="2" fill="#666" opacity=".45"/><rect x="9" y="33" width="100" height="1.5" fill="#666" opacity=".3"/>
<rect x="9" y="36" width="90" height="1.5" fill="#666" opacity=".3"/><circle cx="15" cy="50" r="2" fill="#6a8ad0" opacity=".7"/>
</svg></div>
<div class="t" style="left:9px;top:278.5px;font-size:13px;color:#555;font-family:'Liberation Sans'">6</div>
<svg class="a" style="left:9px;top:290.5px" width="8" height="8" viewBox="0 0 8 8"><polygon points="4,0 5,3 8,3 5.5,5 6.5,8 4,6 1.5,8 2.5,5 0,3 3,3" fill="#555"/></svg>
<div class="a" style="left:27px;top:279.5px;width:119px;height:67px;background:#f7f7f7;border:1px solid #d8d8d8;overflow:hidden"><svg class="a" style="left:0;top:0" width="119" height="67" viewBox="0 0 119 67">
<rect x="12" y="5" width="4" height="1.5" fill="#999"/><rect x="12" y="8" width="12" height="2" fill="#777"/>
<rect x="16" y="13" width="12" height="2" fill="#6cc0c0"/><rect x="94" y="13" width="12" height="2" fill="#e05040"/>
<g fill="#777" opacity=".35"><rect x="6" y="18" width="28" height="1.5"/><rect x="6" y="21" width="28" height="1.5"/><rect x="6" y="24" width="28" height="1.5"/><rect x="6" y="27" width="28" height="1.5"/><rect x="6" y="30" width="28" height="1.5"/><rect x="6" y="33" width="28" height="1.5"/><rect x="6" y="36" width="28" height="1.5"/><rect x="6" y="39" width="28" height="1.5"/><rect x="6" y="42" width="28" height="1.5"/><rect x="6" y="45" width="28" height="1.5"/><rect x="86" y="18" width="28" height="1.5"/><rect x="86" y="21" width="28" height="1.5"/><rect x="86" y="24" width="28" height="1.5"/><rect x="86" y="27" width="28" height="1.5"/><rect x="86" y="30" width="28" height="1.5"/><rect x="86" y="33" width="28" height="1.5"/><rect x="86" y="36" width="28" height="1.5"/><rect x="86" y="39" width="28" height="1.5"/></g>
<polygon points="59,17 78,36 59,55 40,36" fill="#b8bec8"/><polygon points="59,17 78,36 59,36" fill="#e4e8ee"/><polygon points="40,36 59,55 59,36" fill="#d0d6de"/><polygon points="59,36 78,36 59,55" fill="#8a9ab0"/><path d="M49.5 26.5 L68.5 45.5 M68.5 26.5 L49.5 45.5" stroke="#fff" stroke-width="1.2"/>
</svg></div>
<div class="t" style="left:9px;top:361px;font-size:13px;color:#555;font-family:'Liberation Sans'">7</div>
<svg class="a" style="left:9px;top:373px" width="8" height="8" viewBox="0 0 8 8"><polygon points="4,0 5,3 8,3 5.5,5 6.5,8 4,6 1.5,8 2.5,5 0,3 3,3" fill="#555"/></svg>
<div class="a" style="left:27px;top:362px;width:119px;height:67px;background:#f7f7f7;border:1px solid #d8d8d8;overflow:hidden"><svg class="a" style="left:0;top:0" width="119" height="67" viewBox="0 0 119 67">
<polygon points="0,0 60,0 30,25 0,20" fill="#fafafa"/><polygon points="60,0 119,0 119,30 80,35" fill="#f8f8f8"/>
<rect x="14" y="16" width="22" height="14" fill="#f0f0f0" stroke="#e06060" stroke-width="1.2"/>
<rect x="16" y="17" width="8" height="11" fill="#fff" stroke="#aaa" stroke-width=".5"/><rect x="26" y="17" width="8" height="11" fill="#fff" stroke="#aaa" stroke-width=".5"/><rect x="28" y="22" width="5" height="4" fill="#e05040"/><rect x="28" y="21" width="5" height="2" fill="#5bb"/>
<circle cx="18" cy="27" r="4" fill="#d8d8d8" stroke="#333" stroke-width="1.4"/>
<path d="M28 9 L36 7 L40 12 L32 14 Z" fill="#3a4a6a"/><path d="M38 12 L40 18" stroke="#3a4a6a" stroke-width="1"/>
<rect x="19" y="31" width="3" height="6" fill="#e8b890"/><rect x="20" y="38" width="3" height="6" fill="#111"/>
<rect x="24" y="29" width="6" height="8" fill="#f2c060"/><rect x="26" y="29" width="2" height="8" fill="#7cc"/>
<rect x="50" y="26" width="11" height="11" fill="#e05040"/>
<text x="53" y="35" font-size="9" fill="#fff" font-family="Liberation Sans">2</text>
<g fill="#555" opacity=".6"><rect x="63" y="28" width="6" height="5"/><rect x="70" y="28" width="12" height="5"/></g>
</svg></div>
<div class="t" style="left:9px;top:443.5px;font-size:13px;color:#555;font-family:'Liberation Sans'">8</div>
<svg class="a" style="left:9px;top:455.5px" width="8" height="8" viewBox="0 0 8 8"><polygon points="4,0 5,3 8,3 5.5,5 6.5,8 4,6 1.5,8 2.5,5 0,3 3,3" fill="#555"/></svg>
<div class="a" style="left:27px;top:444.5px;width:119px;height:67px;background:#f7f7f7;border:1px solid #d8d8d8;overflow:hidden"><svg class="a" style="left:0;top:0" width="119" height="67" viewBox="0 0 119 67">
<rect x="12" y="5" width="4" height="1.5" fill="#999"/><rect x="12" y="8" width="14" height="2" fill="#6a8ad0"/>
<rect x="12" y="14" width="34" height="1.5" fill="#777"/></svg></div>
</div>
<div class="a" style="left:186px;top:259px;width:10px;height:463px;background:#dadada"></div>
<div class="a" style="left:186px;top:259px;width:10px;height:12px;background:#fff"></div>
<svg class="a" style="left:187px;top:262px" width="8" height="6" viewBox="0 0 8 6"><polygon points="4,1 7,5 1,5" fill="#555"/></svg>
<div class="a" style="left:186px;top:313px;width:10px;height:127px;background:#fff"></div>
<div class="a" style="left:186px;top:708px;width:10px;height:13px;background:#fff"></div>
<svg class="a" style="left:187px;top:712px" width="8" height="6" viewBox="0 0 8 6"><polygon points="1,1 7,1 4,5" fill="#555"/></svg>
<div class="a" style="left:1124px;top:259px;width:11px;height:437px;background:#dadada"></div>
<div class="a" style="left:1124px;top:259px;width:11px;height:12px;background:#fff"></div>
<svg class="a" style="left:1126px;top:262px" width="8" height="6" viewBox="0 0 8 6"><polygon points="4,1 7,5 1,5" fill="#555"/></svg>
<div class="a" style="left:1124px;top:347px;width:11px;height:18px;background:#fff"></div>
<div class="a" style="left:1124px;top:647px;width:11px;height:12px;background:#fff"></div>
<svg class="a" style="left:1126px;top:650px" width="8" height="6" viewBox="0 0 8 6"><polygon points="1,1 7,1 4,5" fill="#555"/></svg>
<svg class="a" style="left:1126px;top:661px" width="8" height="22" viewBox="0 0 8 22"><path d="M1 5 L4 2 L7 5 M1 8 L4 5 L7 8 M1 3 L7 3" stroke="#555" stroke-width=".9" fill="none"/><path d="M1 14 L4 17 L7 14 M1 17 L4 20 L7 17 M1 20 L7 20" stroke="#555" stroke-width=".9" fill="none"/></svg>
<!-- status bar -->
<div class="a" id="status" style="left:24px;top:722px;width:1111px;height:16px;background:#f3f2f1"></div>


<!-- statusbar contents -->
<div class="a" style="left:2px;top:738px;width:201px;height:2px;background:#3c3c40"></div>
<div class="a" style="left:203px;top:738px;width:932px;height:2px;background:#e6dde2"></div>
<div class="t" style="left:31px;top:725.8px;font-size:8.6px;color:#555;letter-spacing:0px;">幻灯片 第 4 张，共 19 张</div>
<div class="t" style="left:151px;top:725.8px;font-size:8.6px;color:#555;">中文(中国)</div>
<svg class="a" style="left:203px;top:724px" width="11" height="13" viewBox="0 0 11 13"><circle cx="5.5" cy="2" r="1.5" fill="#666"/><path d="M1 4.5 L10 4.5 M5.5 4.5 L5.5 8 L3 12 M5.5 8 L8 12" stroke="#666" stroke-width="1.1" fill="none"/></svg>
<div class="t" style="left:216px;top:726.0px;font-size:9px;color:#666;">辅助功能: 调查</div>
<svg class="a" style="left:786px;top:723px" width="13" height="14" viewBox="0 0 13 14"><path d="M4 4 L6.5 1.5 L9 4" stroke="#666" stroke-width="1" fill="none"/><path d="M0.5 7 L12.5 7 M0.5 9.5 L12.5 9.5 M0.5 12 L12.5 12" stroke="#666" stroke-width="1"/></svg>
<div class="t" style="left:799px;top:725.3px;font-size:9.5px;color:#444;">备注</div>
<svg class="a" style="left:831px;top:724px" width="12" height="13" viewBox="0 0 12 13"><path d="M1 1 L11 1 L11 8.5 L5 8.5 L2.5 11.5 L2.5 8.5 L1 8.5 Z" stroke="#555" stroke-width="1" fill="none"/></svg>
<div class="t" style="left:844px;top:725.3px;font-size:9.5px;color:#444;">批注</div>
<div class="a" style="left:875px;top:723px;width:28px;height:15px;background:#d5d4d3"></div>
<svg class="a" style="left:883px;top:725px" width="13" height="11" viewBox="0 0 13 11"><rect x="0.5" y="0.5" width="12" height="10" stroke="#555" stroke-width="1" fill="none"/><rect x="3" y="3" width="9" height="5" stroke="#555" stroke-width="1" fill="none"/></svg>
<svg class="a" style="left:913px;top:725px" width="11" height="11" viewBox="0 0 11 11"><rect x="0.5" y="0.5" width="4" height="4" stroke="#555" fill="none"/><rect x="6.5" y="0.5" width="4" height="4" stroke="#555" fill="none"/><rect x="0.5" y="6.5" width="4" height="4" stroke="#555" fill="none"/><rect x="6.5" y="6.5" width="4" height="4" stroke="#555" fill="none"/></svg>
<svg class="a" style="left:940px;top:725px" width="12" height="11" viewBox="0 0 12 11"><path d="M0.5 1 L5.5 1.5 L6 2 L6.5 1.5 L11.5 1 L11.5 10 L6.5 10 L6 10.5 L5.5 10 L0.5 10 Z M6 2 L6 10" stroke="#555" fill="none"/><path d="M2 4 L4.5 4 M2 6 L4.5 6 M7.5 4 L10 4 M7.5 6 L10 6" stroke="#555" stroke-width=".7"/></svg>
<svg class="a" style="left:969px;top:724px" width="12" height="13" viewBox="0 0 12 13"><rect x="0.5" y="0.5" width="11" height="7" stroke="#555" fill="none"/><path d="M6 7.5 L6 11 M3 12 L9 12 M4 3 L8 4 L4 5" stroke="#555" fill="none"/></svg>
<div class="a" style="left:995px;top:730px;width:5px;height:1px;background:#999"></div>
<div class="a" style="left:1004px;top:730.5px;width:72px;height:1px;background:#666"></div>
<div class="a" style="left:1031.5px;top:726px;width:3px;height:9px;background:#333"></div>
<div class="a" style="left:1040px;top:728.5px;width:1px;height:5px;background:#888"></div>
<div class="t" style="left:1079px;top:725.0px;font-size:10px;color:#888;">+</div>
<div class="t" style="left:1095px;top:725.0px;font-size:10px;color:#444;">81%</div>
<svg class="a" style="left:1121px;top:724px" width="13" height="13" viewBox="0 0 13 13"><rect x="3" y="3" width="7" height="7" stroke="#555" fill="none"/><path d="M6.5 0 L4.5 2 L8.5 2 Z M6.5 13 L4.5 11 L8.5 11 Z M0 6.5 L2 4.5 L2 8.5 Z M13 6.5 L11 4.5 L11 8.5 Z" fill="#555"/></svg>
<!-- slide -->
<div class="a" id="slide" style="left:288px;top:258px;width:749px;height:431px;background:#fff;overflow:hidden">
<svg class="a" style="left:0;top:0" width="749" height="418" viewBox="0 0 749 418">
 <defs><filter id="sbg" x="-5%" y="-5%" width="110%" height="110%"><feGaussianBlur stdDeviation="4"/></filter></defs>
 <rect width="749" height="418" fill="#f3f3f3"/>
 <g filter="url(#sbg)">
 <polygon points="110,0 520,0 300,90 0,90 0,60" fill="#f5f5f5"/>
 <polygon points="0,0 110,0 0,60" fill="#f9f9f9"/>
 <polygon points="520,0 749,0 749,140 600,100" fill="#f9f9f9"/>
 <polygon points="300,90 520,0 600,100 580,200 330,170" fill="#f4f4f4"/>
 <polygon points="0,90 300,90 200,230 0,260" fill="#ececec"/>
 <polygon points="600,100 749,140 749,280 580,200" fill="#f6f6f6"/>
 <polygon points="580,200 749,280 749,390 560,380" fill="#f0f0f0"/>
 <polygon points="0,260 200,230 260,418 0,418" fill="#efefef"/>
 <polygon points="200,230 330,170 580,200 560,380 260,418" fill="#f1f1f1"/>
 <polygon points="560,380 749,390 749,418 260,418" fill="#f4f4f4"/>
 </g>
 <rect x="0" y="0" width="749" height="2" fill="#e2e2e2"/>
</svg>
<div class="t" style="left:68px;top:24px;font-size:17px;color:#333">1.1</div>
<div class="t" style="left:68px;top:45px;font-size:15.5px;color:#333">研究背景</div>
<svg class="a" style="left:0;top:0" width="749" height="431" viewBox="288 258 749 431">
 <path d="M428 365.5 L889 365.5" stroke="#e8574a" stroke-width="8" fill="none"/>
 <polygon points="888.5,357.5 897.5,365.5 888.5,373.5" fill="#e8574a"/>
 <path d="M428 365.5 A67 67 0 0 0 428 499.5 L662 499.5" stroke="#e8574a" stroke-width="8" fill="none"/>
 <path d="M662 499.5 L896 499.5 A67.5 67.5 0 0 1 896 634.5 L436 634.5" stroke="#83c8c8" stroke-width="8" fill="none"/>
 <polygon points="436,627 427.5,634.5 436,642" fill="#83c8c8"/>
 <rect x="896" y="495.5" width="1" height="8" fill="#fff" opacity=".6"/><rect x="896" y="630.5" width="1" height="8" fill="#fff" opacity=".6"/>
</svg>
<div class="t" style="left:138px;top:135.0px;font-size:14px;color:#2b2b2b;font-family:'Liberation Serif',serif">实施乡村振兴战略，是党的十九大作出的重大决策部署，是决胜全面建</div>
<div class="t" style="left:138px;top:151.1px;font-size:14px;color:#2b2b2b;font-family:'Liberation Serif',serif">成小康社会、全面建设社会主义现代化国家的重大历史任务，具有划时</div>
<div class="t" style="left:138px;top:167.2px;font-size:14px;color:#2b2b2b;font-family:'Liberation Serif',serif">代的里程碑意义。事业成败，关键在人。为全面推动农业经济发展，我</div>
<div class="t" style="left:138px;top:183.3px;font-size:14px;color:#2b2b2b;font-family:'Liberation Serif',serif">国急需一批掌握最新科学技术，对农村现状有一定研究，熟知农业产业，</div>
<div class="t" style="left:138px;top:199.4px;font-size:14px;color:#2b2b2b;font-family:'Liberation Serif',serif">敢于创新敢于创业的农业人才。</div>
<div class="t" style="left:138px;top:269.5px;font-size:14px;color:#2b2b2b;font-family:'Liberation Serif',serif">方城县营坊村，隶属于河南省南阳市，户籍人口2300多人。解决农业经</div>
<div class="t" style="left:138px;top:285.8px;font-size:14px;color:#2b2b2b;font-family:'Liberation Serif',serif">济发展问题尤为重要。与大部分地区相同，营坊村居民收入水平仍然比</div>
<div class="t" style="left:138px;top:302.1px;font-size:14px;color:#2b2b2b;font-family:'Liberation Serif',serif">较低。同时受到疫情影响，农业发展遭受到一定的打击，急需一批拥有</div>
<div class="t" style="left:138px;top:318.4px;font-size:14px;color:#2b2b2b;font-family:'Liberation Serif',serif">创新创业精神的农业人才扎根农村发展农业。</div>
</div>
<!-- sticker -->
<svg class="a" style="left:1040px;top:550px" width="95" height="95" viewBox="0 0 95 95">
 <defs>
  <radialGradient id="stg" cx="50%" cy="50%" r="55%"><stop offset="0" stop-color="#a4d6f4"/><stop offset=".5" stop-color="#5eaee6"/><stop offset="1" stop-color="#2d8ed8"/></radialGradient>
  <filter id="stb"><feGaussianBlur stdDeviation="1"/></filter>
 </defs>
 <path d="M24 30 Q30 14 50 13 Q62 10 72 14 Q90 20 92 40 Q94 62 82 74 Q70 84 52 83 Q32 84 24 70 Q16 52 24 30 Z" fill="url(#stg)" filter="url(#stb)"/>
 <path d="M38 40 Q38 20 54 19 Q70 20 71 40 Z" fill="#8ccbee" stroke="#d8b48a" stroke-width=".8"/>
 <rect x="35" y="33" width="38" height="7" rx="3.5" fill="#f5ecd0" stroke="#d8b48a" stroke-width=".8"/>
 <circle cx="53" cy="19" r="4" fill="#f5ecd0" stroke="#d8b48a" stroke-width=".6"/>
 <ellipse cx="23" cy="50" rx="14" ry="7.5" fill="#fff" stroke="#d2a57a" stroke-width="1" transform="rotate(-8 23 50)"/>
 <ellipse cx="84" cy="45" rx="12" ry="7" fill="#fff" stroke="#d2a57a" stroke-width="1" transform="rotate(8 84 45)"/>
 <ellipse cx="52" cy="52" rx="18" ry="14" fill="#fff" stroke="#d2a57a" stroke-width="1"/>
 <ellipse cx="36" cy="50" rx="5" ry="7" fill="#f7efc8" stroke="#d8b48a" stroke-width=".6"/>
 <ellipse cx="68" cy="50" rx="5" ry="7" fill="#f7efc8" stroke="#d8b48a" stroke-width=".6"/>
 <ellipse cx="43" cy="49" rx="1.6" ry="2.2" fill="#3aa0e0"/><ellipse cx="61" cy="49" rx="1.6" ry="2.2" fill="#3aa0e0"/>
 <ellipse cx="40" cy="54" rx="3" ry="1.8" fill="#f8c0d0"/><ellipse cx="65" cy="54" rx="3" ry="1.8" fill="#f8c0d0"/>
 <path d="M50 51 L55 51 L52.5 55 Z" fill="#e8a0a8"/>
 <rect x="38" y="58" width="30" height="7" rx="3" fill="#a8daf4" stroke="#d8b48a" stroke-width=".6"/>
 <rect x="39" y="64" width="28" height="11" rx="4" fill="#7cc2ea" stroke="#d8b48a" stroke-width=".6"/>
 <ellipse cx="40" cy="74" rx="4" ry="3" fill="#5ab0e0"/><ellipse cx="56" cy="74" rx="4" ry="3" fill="#5ab0e0"/>
 <path d="M66 60 Q74 62 72 72 Q68 74 66 70 Z" fill="#fff" stroke="#d8b48a" stroke-width=".6"/>
 <g stroke="#e8f6ff" stroke-width="1.2"><path d="M27 62 L27 72 M22.5 64.5 L31.5 69.5 M22.5 69.5 L31.5 64.5"/><path d="M81 45 L81 55 M76.5 47.5 L85.5 52.5 M76.5 52.5 L85.5 47.5"/></g>
 <text x="73" y="35" font-size="9" fill="#fff" font-family="Liberation Sans">中</text>
 <path d="M63 17 L66 15 Q68 17 70 15 L73 17 L72 20 L70.5 19.5 L70.5 24 L65.5 24 L65.5 19.5 L64 20 Z" fill="#fff"/>
 <circle cx="28" cy="33" r="1.2" fill="#fff"/><circle cx="81" cy="64" r="1.3" fill="#fdf6c0"/>
</svg>
</body></html>
